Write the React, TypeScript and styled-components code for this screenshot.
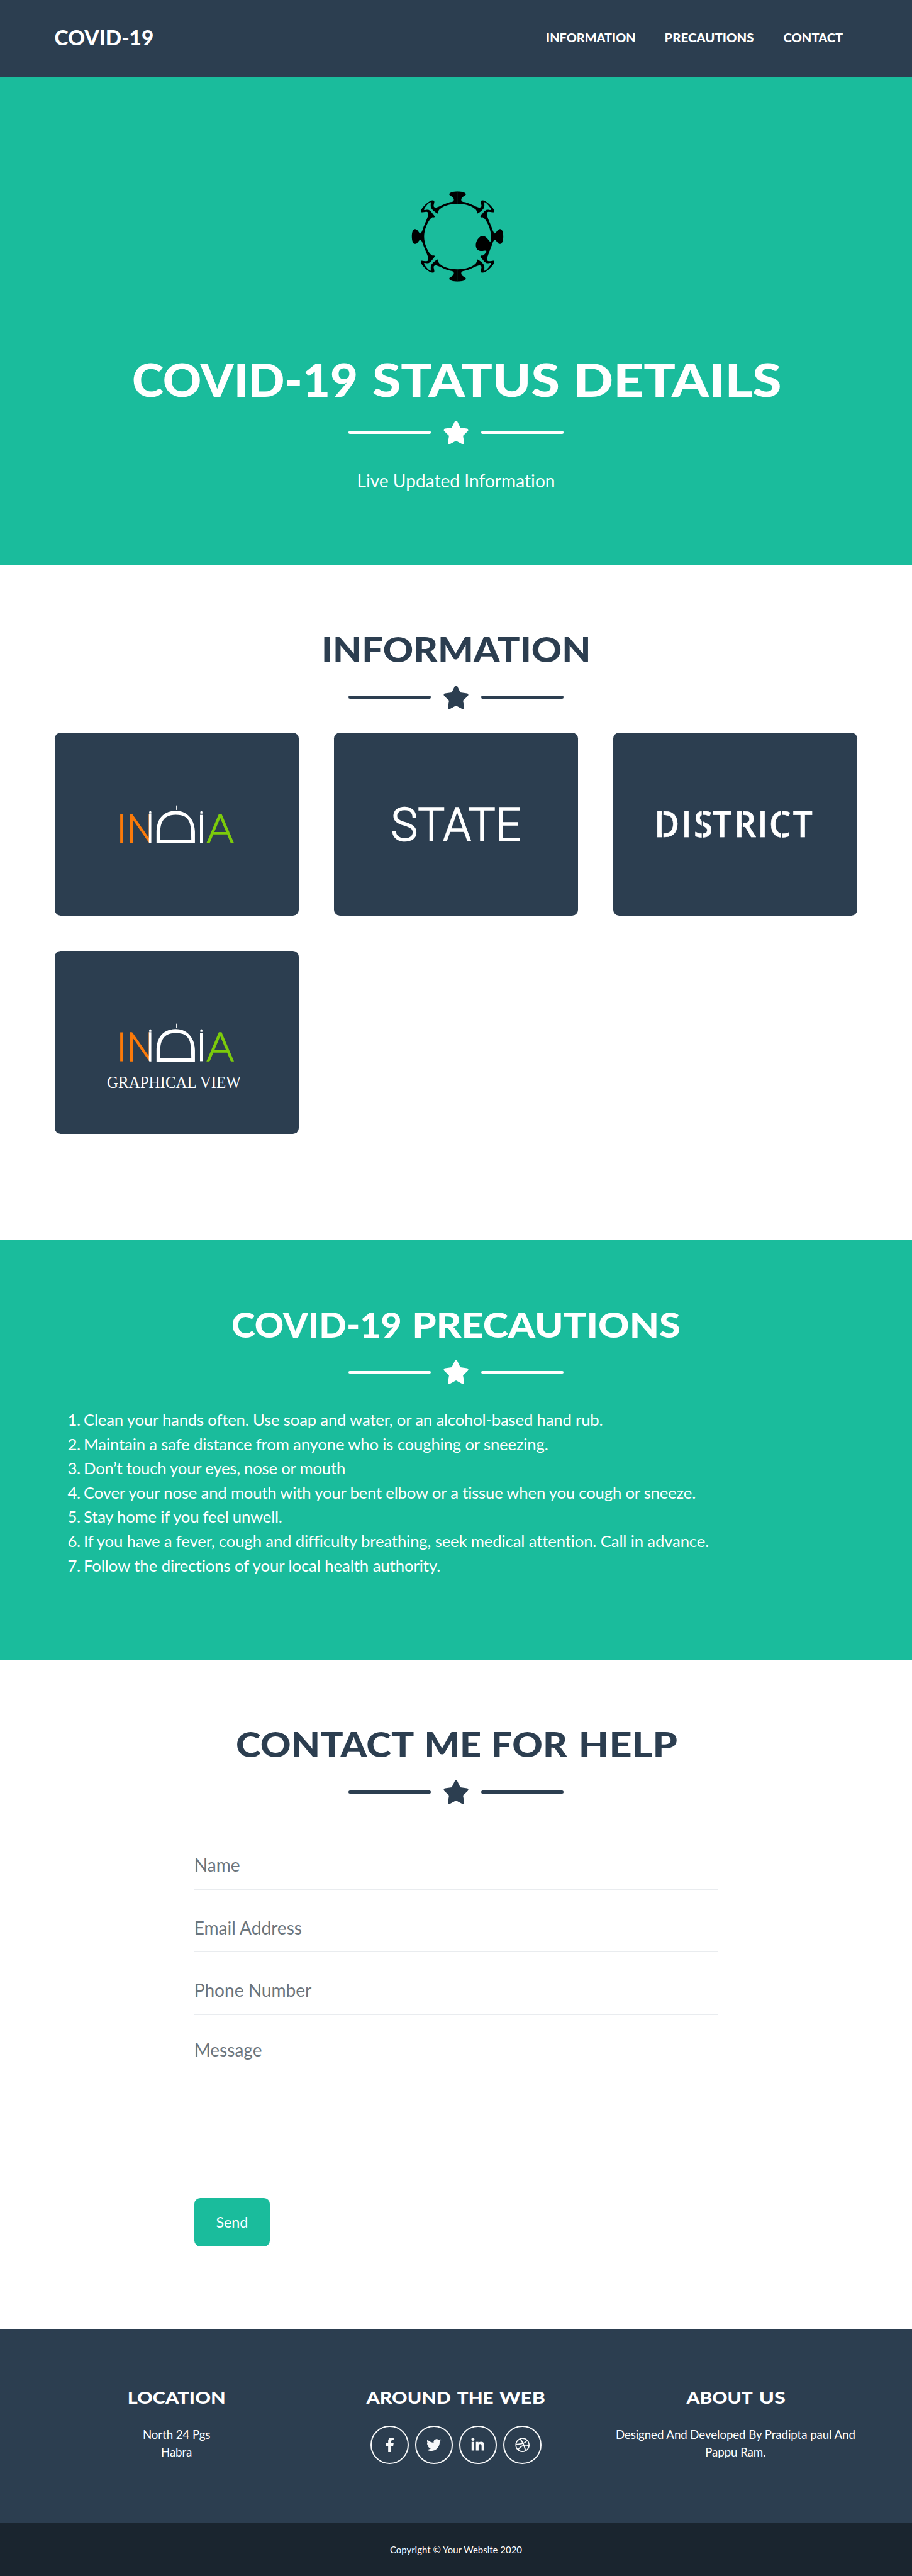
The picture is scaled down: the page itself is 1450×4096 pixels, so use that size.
import React from 'react';
import styled, { createGlobalStyle } from 'styled-components';
import { FaDribbble, FaFacebookF, FaLinkedinIn, FaStar, FaTwitter } from 'react-icons/fa';

const navy = '#2c3e50';
const teal = '#1abc9c';

/* Design units: 32 to one rem. */
const u = (n: number) => `${n / 32}rem`;

const GlobalStyle = createGlobalStyle`
  html { font-size: 18.7097px; background: #fff; }
  body {
    margin: 0;
    font-family: Lato, "Open Sans", sans-serif;
    color: ${navy};
    line-height: 1.5;
  }
  *, *::before, *::after { box-sizing: border-box; }
`;

const Page = styled.div`
  display: flex;
  flex-direction: column;
`;

const Container = styled.div`
  width: ${u(2184)};
  margin: 0 auto;
`;

/* Display type: a heavy face widened, word by word, to a geometric proportion. */
const DisplayLine = styled.span`
  white-space: nowrap;
  font-weight: 900;
  word-spacing: 0.135em;
`;

const WideWord = styled.span<{ $w: number; $k: number }>`
  display: inline-flex;
  justify-content: center;
  width: ${p => u(p.$w)};
  & > span { display: block; flex: none; transform: scaleX(${p => p.$k}); }
`;

type Word = [text: string, width: number, stretch: number];

function Display({ words }: { words: Word[] }) {
  return (
    <DisplayLine>
      {words.map(([text, w, k], i) => (
        <React.Fragment key={text}>
          {i > 0 && ' '}
          <WideWord $w={w} $k={k}><span>{text}</span></WideWord>
        </React.Fragment>
      ))}
    </DisplayLine>
  );
}

const Nav = styled.nav`
  height: ${u(208)};
  background: ${navy};
  color: #fff;
`;

const NavRow = styled(Container)`
  height: 100%;
  display: flex;
  align-items: center;
  justify-content: space-between;
  padding: 0 ${u(40)} ${u(2)} ${u(2)};
`;

const Brand = styled.a`
  display: flex;
  font-size: ${u(54.6)};
  line-height: 1.5;
`;

const NavLinks = styled.div`
  display: flex;
  gap: ${u(82)};
  font-size: ${u(31.2)};
  line-height: 1.5;
`;

const NavLink = styled.a`
  display: flex;
`;

const Masthead = styled.header`
  height: ${u(1328)};
  padding-top: ${u(272)};
  background: ${teal};
  color: #fff;
  display: flex;
  flex-direction: column;
  align-items: center;
`;

const Virus = styled.svg`
  display: block;
  width: ${u(320)};
  height: ${u(320)};
`;

const MastheadTitle = styled.h1`
  display: flex;
  margin: ${u(153.8)} 0 ${u(36.2)};
  font-size: ${u(124.8)};
  line-height: ${u(154)};
`;

const Subtitle = styled.p`
  margin: ${u(63.4)} 0 0;
  font-size: ${u(48)};
  line-height: ${u(72)};
  letter-spacing: ${u(0.08)};
`;

const Section = styled.section<{ $tone?: 'teal' }>`
  padding: ${u(173)} 0 ${u(192)};
  background: ${p => (p.$tone ? teal : '#fff')};
  color: ${p => (p.$tone ? '#fff' : navy)};
`;

const SectionTitle = styled.h2`
  display: flex;
  justify-content: center;
  margin: 0 0 ${u(39.8)};
  font-size: ${u(93.6)};
  line-height: ${u(115.2)};
`;

const DividerRow = styled.div`
  display: flex;
  align-items: center;
  justify-content: center;
  gap: ${u(32)};
  height: ${u(64)};
  font-size: ${u(64)};
  svg { display: block; width: ${u(72)}; height: ${u(64)}; }
`;

const DividerLine = styled.span`
  width: ${u(224)};
  height: ${u(8)};
  border-radius: ${u(32)};
  background: currentColor;
`;

function Divider() {
  return (
    <DividerRow>
      <DividerLine />
      <FaStar />
      <DividerLine />
    </DividerRow>
  );
}

const CardGrid = styled.div`
  display: grid;
  grid-template-columns: repeat(3, 1fr);
  gap: ${u(96)};
  margin: ${u(64)} 0 ${u(96)};
`;

const Card = styled.div`
  height: ${u(498)};
  border-radius: ${u(16)};
  background: ${navy};
  overflow: hidden;
`;

const Art = styled.svg`
  display: block;
  width: 100%;
  height: 100%;
`;

const Precautions = styled.ol`
  margin: ${u(64)} 0 ${u(32)};
  padding-left: ${u(36)};
  font-size: ${u(44)};
  line-height: ${u(66)};
  list-style: none;
  counter-reset: step;
`;

const Precaution = styled.li<{ $tracking: number }>`
  display: flex;
  letter-spacing: ${p => u(p.$tracking)};
  counter-increment: step;
  &::before {
    content: counter(step) '.';
    flex: none;
    width: ${u(43.5)};
    letter-spacing: -0.02em;
  }
`;

const Form = styled.form`
  width: ${u(1424)};
  margin: ${u(64)} auto 0;
  padding-bottom: ${u(32)};
  display: flex;
  flex-direction: column;
  align-items: stretch;
`;

const Field = styled.input`
  height: ${u(170)};
  padding: ${u(65.5)} 0 ${u(30.5)};
  border: 0;
  border-bottom: ${u(2)} solid #e9ecef;
  background: transparent;
  font-family: inherit;
  font-size: ${u(48)};
  line-height: ${u(72)};
  outline: none;
  &::placeholder { color: #6c757d; opacity: 1; }
`;

const MessageField = styled.textarea`
  height: ${u(450)};
  padding: ${u(59)} 0 0;
  border: 0;
  border-bottom: ${u(2)} solid #e9ecef;
  background: transparent;
  font-family: inherit;
  font-size: ${u(48)};
  line-height: ${u(72)};
  resize: none;
  outline: none;
  overflow: hidden;
  &::placeholder { color: #6c757d; opacity: 1; }
`;

const SendButton = styled.button`
  align-self: flex-start;
  width: ${u(206)};
  height: ${u(132)};
  margin-top: ${u(48)};
  padding: 0;
  border: 0;
  border-radius: ${u(16)};
  background: ${teal};
  color: #fff;
  font-family: inherit;
  font-size: ${u(40)};
  line-height: 1.5;
`;

const Footer = styled.footer`
  height: ${u(528)};
  padding: ${u(157)} ${u(100)} 0;
  background: ${navy};
  color: #fff;
  display: grid;
  grid-template-columns: repeat(3, 1fr);
`;

const FooterColumn = styled.div`
  display: flex;
  flex-direction: column;
  align-items: center;
  padding: 0 ${u(24)};
`;

const FooterTitle = styled.h4`
  display: flex;
  margin: 0 0 ${u(49)};
  font-size: ${u(46.8)};
  line-height: ${u(57.6)};
`;

const FooterText = styled.p`
  margin: 0;
  text-align: center;
  font-size: ${u(32)};
  line-height: ${u(48)};
  letter-spacing: -0.004em;
`;

const Socials = styled.div`
  display: flex;
  gap: ${u(16)};
`;

const SocialButton = styled.a`
  display: flex;
  align-items: center;
  justify-content: center;
  width: ${u(104)};
  height: ${u(104)};
  border: ${u(4)} solid #f8f9fa;
  border-radius: 50%;
  color: #f8f9fa;
  font-size: ${u(40)};
`;

const Copyright = styled.div`
  height: ${u(144)};
  padding-top: ${u(2)};
  display: flex;
  align-items: center;
  justify-content: center;
  background: #1a252f;
  color: #fff;
  font-size: ${u(25.6)};
`;

const quadrant =
  'M494 121 C530 121 563 128 563 144 C563 152 548 158 540 163 C520 176 520 200 540 205 C590 210 640 245 668 251 C685 254 691 245 690 235 C688 220 680 203 688 195 C700 187 725 198 750 220 C780 247 800 275 794 288 C785 295 765 284 748 286 C733 288 732 302 738 325 C745 350 770 400 783 440 C790 458 797 466 803 461 C815 450 822 427 842 427 C860 427 868 455 868 488 L768 488 C768 430 740 370 715 342 C705 331 697 330 688 332 C680 331 680 326 684 320 C700 300 715 275 735 270 C750 268 764 275 768 271 C770 255 730 212 716 207 C710 212 717 235 712 250 C705 268 680 290 655 302 C650 290 656 285 645 270 C620 240 560 220 494 220 Z';

function VirusIcon() {
  return (
    <Virus viewBox="0 0 960 960">
      <path d={quadrant} />
      <path d={quadrant} transform="translate(990 0) scale(-1 1)" />
      <path d={quadrant} transform="translate(0 975) scale(1 -1)" />
      <path d={quadrant} transform="translate(990 975) scale(-1 -1)" />
      <path d="M769 542 C745 515 730 484 700 484 C665 484 643 530 644 560 C645 590 665 606 690 606 C705 606 720 602 729 604 C733 612 722 640 712 644 L738 655 L778 545 L778 487 L768 487 Z" />
    </Virus>
  );
}

function IndiaMark({ id }: { id: string }) {
  return (
    <g fontFamily="Lato, sans-serif" fontWeight="300" fontSize="106.5">
      <defs>
        <linearGradient id={id} gradientUnits="userSpaceOnUse" x1="255" y1="0" x2="257" y2="0">
          <stop offset="0" stopColor="#fb7a0a" />
          <stop offset="1" stopColor="#fff" />
        </linearGradient>
      </defs>
      <text x="168" y="300" fill="#fb7a0a" stroke="#fb7a0a" strokeWidth="2">I</text>
      <text x="195.7" y="300" textLength="76" lengthAdjust="spacingAndGlyphs" fill={`url(#${id})`} stroke={`url(#${id})`} strokeWidth="2.6">N</text>
      <text x="413" y="300" textLength="74" lengthAdjust="spacingAndGlyphs" fill="#7ccb0b" stroke="#7ccb0b" strokeWidth="2.4">A</text>
      <g fill="#fff">
        <path d="M257 220.4 V216 Q257 213 259.8 213 Q262.6 213 262.6 216 V220.4 Z" />
        <path d="M396 220.4 V216 Q396 213 398.8 213 Q401.6 213 401.6 216 V220.4 Z" />
        <rect x="395.1" y="223.5" width="7.6" height="76.5" />
        <rect x="330.3" y="197.5" width="3" height="13" rx="1.5" />
        <path
          fillRule="evenodd"
          d="M276.8 301 V270 C276.8 236 295 212.5 329 212.5 C363 212.5 381.3 240 381.3 270 V301 Z M286.6 291 H371.4 C371.4 250 370 223.2 329 223.2 C292 223.2 286.6 250 286.6 275 Z"
        />
      </g>
    </g>
  );
}

const IndiaCard = () => (
  <Art viewBox="0 0 664 498"><IndiaMark id="india-stem" /></Art>
);

const StateCard = () => (
  <Art viewBox="0 0 664 498">
    <text x="155" y="295" textLength="354" lengthAdjust="spacingAndGlyphs" fontFamily="Roboto, sans-serif" fontWeight="300" fontSize="128" fill="#fff" stroke="#fff" strokeWidth="2.8">STATE</text>
  </Art>
);

const DistrictCard = () => (
  <Art viewBox="0 0 664 498">
    <text transform="scale(.96 1)" x="115.9 192.3 228 280.5 342 408 441.5 509" y="283.8" fontFamily="'Open Sans', sans-serif" fontWeight="600" fontSize="98" fill="#fff" stroke="#fff" strokeWidth="1">DISTRICT</text>
    <g fill={navy}>
      <rect x="133" y="205" width="3.4" height="88" />
      <rect x="240.6" y="205" width="3.2" height="88" />
      <rect x="349.6" y="205" width="3.2" height="88" />
      <rect x="456" y="205" width="2.8" height="88" />
    </g>
  </Art>
);

const GraphicalCard = () => (
  <Art viewBox="0 0 664 498">
    <IndiaMark id="india-graph-stem" />
    <text x="142" y="372.3" textLength="364" lengthAdjust="spacingAndGlyphs" fontFamily="'Liberation Serif', serif" fontSize="45" fill="#fff">GRAPHICAL VIEW</text>
  </Art>
);

const precautions: [string, number][] = [
  ['Clean your hands often. Use soap and water, or an alcohol-based hand rub.', -0.34],
  ['Maintain a safe distance from anyone who is coughing or sneezing.', -0.28],
  ['Don’t touch your eyes, nose or mouth', -0.39],
  ['Cover your nose and mouth with your bent elbow or a tissue when you cough or sneeze.', -0.35],
  ['Stay home if you feel unwell.', -0.4],
  ['If you have a fever, cough and difficulty breathing, seek medical attention. Call in advance.', -0.26],
  ['Follow the directions of your local health authority.', -0.14],
];

const cards = [IndiaCard, StateCard, DistrictCard, GraphicalCard];
const socials = [FaFacebookF, FaTwitter, FaLinkedinIn, FaDribbble];

export default function App() {
  return (
    <Page>
      <GlobalStyle />
      <Nav>
        <NavRow>
          <Brand><Display words={[['COVID-19', 267, 1.045]]} /></Brand>
          <NavLinks>
            <NavLink><Display words={[['INFORMATION', 240.5, 1.09]]} /></NavLink>
            <NavLink><Display words={[['PRECAUTIONS', 240.5, 1.118]]} /></NavLink>
            <NavLink><Display words={[['CONTACT', 161.3, 1.106]]} /></NavLink>
          </NavLinks>
        </NavRow>
      </Nav>

      <Masthead>
        <VirusIcon />
        <MastheadTitle>
          <Display words={[['COVID-19', 608, 1.041], ['STATUS', 503, 1.129], ['DETAILS', 552, 1.151]]} />
        </MastheadTitle>
        <Divider />
        <Subtitle>Live Updated Information</Subtitle>
      </Masthead>

      <Section>
        <Container>
          <SectionTitle><Display words={[['INFORMATION', 718, 1.092]]} /></SectionTitle>
          <Divider />
          <CardGrid>
            {cards.map((Content, i) => <Card key={i}><Content /></Card>)}
          </CardGrid>
        </Container>
      </Section>

      <Section $tone="teal">
        <Container>
          <SectionTitle><Display words={[['COVID-19', 458, 1.046], ['PRECAUTIONS', 722, 1.119]]} /></SectionTitle>
          <Divider />
          <Precautions>
            {precautions.map(([text, tracking]) => (
              <Precaution key={text} $tracking={tracking}>{text}</Precaution>
            ))}
          </Precautions>
        </Container>
      </Section>

      <Section>
        <Container>
          <SectionTitle>
            <Display words={[['CONTACT', 482, 1.102], ['ME', 144.5, 1.086], ['FOR', 203, 1.096], ['HELP', 262, 1.151]]} />
          </SectionTitle>
          <Divider />
          <Form>
            <Field placeholder="Name" />
            <Field placeholder="Email Address" />
            <Field placeholder="Phone Number" />
            <MessageField placeholder="Message" />
            <SendButton type="button">Send</SendButton>
          </Form>
        </Container>
      </Section>

      <Footer>
        <FooterColumn>
          <FooterTitle><Display words={[['LOCATION', 260, 1.12]]} /></FooterTitle>
          <FooterText>North 24 Pgs<br />Habra</FooterText>
        </FooterColumn>
        <FooterColumn>
          <FooterTitle><Display words={[['AROUND', 228.7, 1.106], ['THE', 98, 1.083], ['WEB', 123.5, 1.162]]} /></FooterTitle>
          <Socials>
            {socials.map((Icon, i) => <SocialButton key={i}><Icon /></SocialButton>)}
          </Socials>
        </FooterColumn>
        <FooterColumn>
          <FooterTitle><Display words={[['ABOUT', 181, 1.092], ['US', 67.4, 1.185]]} /></FooterTitle>
          <FooterText>Designed And Developed By Pradipta paul And Pappu Ram.</FooterText>
        </FooterColumn>
      </Footer>
      <Copyright>Copyright © Your Website 2020</Copyright>
    </Page>
  );
}
